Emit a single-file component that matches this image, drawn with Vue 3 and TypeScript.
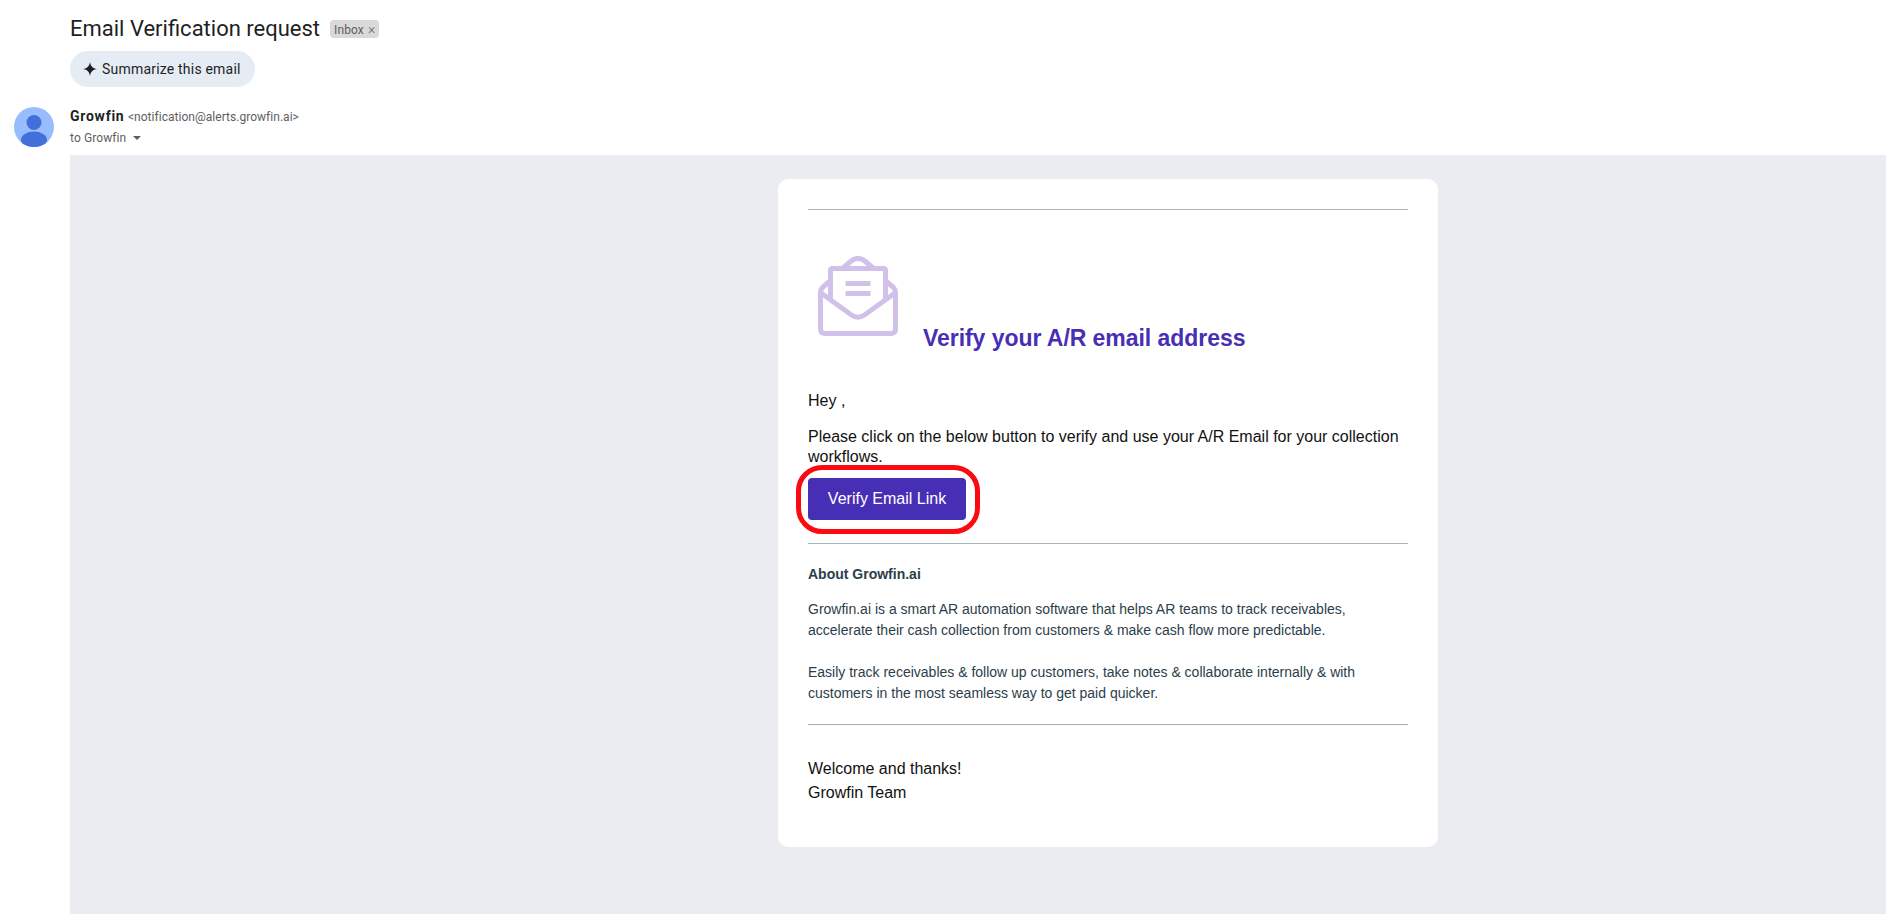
<script setup lang="ts">
const aboutParagraphs: string[] = [
  'Growfin.ai is a smart AR automation software that helps AR teams to track receivables, accelerate their cash collection from customers & make cash flow more predictable.',
  'Easily track receivables & follow up customers, take notes & collaborate internally & with customers in the most seamless way to get paid quicker.',
]
</script>

<template>
  <div class="page">
    <header class="head">
      <div class="title-row">
        <h1 class="title">Email Verification request</h1>
        <span class="chip">Inbox <span class="chip-x">×</span></span>
      </div>
      <button class="summarize" type="button">
        <svg class="spark" viewBox="0 0 16 16" width="16" height="16" aria-hidden="true">
          <path d="M8 1 C8.6 5.2 10.8 7.4 15 8 C10.8 8.6 8.6 10.8 8 15 C7.4 10.8 5.2 8.6 1 8 C5.2 7.4 7.4 5.2 8 1 Z" fill="#1f1f1f" />
        </svg>
        Summarize this email
      </button>
    </header>

    <section class="sender">
      <svg class="avatar" viewBox="0 0 40 40" width="40" height="40" aria-hidden="true">
        <defs>
          <clipPath id="avatar-clip"><circle cx="20" cy="20" r="20" /></clipPath>
        </defs>
        <g clip-path="url(#avatar-clip)">
          <rect width="40" height="40" fill="#98bdff" />
          <circle cx="20" cy="15.5" r="7.5" fill="#4270da" />
          <ellipse cx="20" cy="33" rx="13" ry="8.5" fill="#4270da" />
        </g>
      </svg>
      <div class="sender-text">
        <div class="from"><strong>Growfin</strong> <span class="addr">&lt;notification@alerts.growfin.ai&gt;</span></div>
        <div class="to">to Growfin <span class="caret"></span></div>
      </div>
    </section>

    <main class="canvas">
      <article class="card">
        <hr class="rule" />
        <div class="hero">
          <svg class="envelope" viewBox="0 0 80 80" width="80" height="80" fill="none" stroke="#d1c1e9" stroke-width="5" stroke-linejoin="round" stroke-linecap="round" aria-hidden="true">
            <path d="M12 25 L4.5 31.5 Q2.5 33.5 2.5 37 V73 Q2.5 77.5 7 77.5 H73 Q77.5 77.5 77.5 73 V37 Q77.5 33.5 75.5 31.5 L68 25" />
            <path d="M25 12 L32.5 5.5 Q40 -0.5 47.5 5.5 L55 12" />
            <path d="M3 37 L33.5 59 Q40 63.5 46.5 59 L77 37" />
            <path d="M12.5 43 V14.5 Q12.5 12.5 14.5 12.5 H65.5 Q67.5 12.5 67.5 14.5 V43" />
            <path d="M27.5 27.5 H52.5 M27.5 37.5 H52.5" stroke-linecap="butt" />
          </svg>
          <h2 class="heading">Verify your A/R email address</h2>
        </div>
        <p class="hey">Hey ,</p>
        <p class="intro">Please click on the below button to verify and use your A/R Email for your collection workflows.</p>
        <div class="cta">
          <a class="verify">Verify Email Link</a>
          <span class="highlight"></span>
        </div>
        <hr class="rule rule-mid" />
        <h3 class="about-title">About Growfin.ai</h3>
        <p v-for="text in aboutParagraphs" :key="text" class="about">{{ text }}</p>
        <hr class="rule rule-end" />
        <p class="signoff">Welcome and thanks!<br />Growfin Team</p>
      </article>
    </main>
  </div>
</template>

<style scoped>
.page {
  height: 914px;
  display: flex;
  flex-direction: column;
  overflow: hidden;
  background: #fff;
  color: #1f1f1f;
  font-family: Roboto, "Liberation Sans", sans-serif;
}
.head {
  padding: 14px 0 0 70px;
}
.title-row {
  display: flex;
  align-items: center;
  gap: 10px;
  height: 30px;
}
.title {
  margin: 0;
  font-size: 22px;
  font-weight: 400;
  line-height: 30px;
  color: #1f1f1f;
}
.chip {
  height: 18px;
  padding: 0 4px;
  border-radius: 4px;
  background: #d9d9d9;
  color: #5e5e5e;
  font-size: 12px;
  line-height: 18px;
  letter-spacing: 0.1px;
  white-space: nowrap;
}
.chip-x {
  margin-left: 1px;
  font-size: 14px;
  font-weight: 300;
}
.summarize {
  display: flex;
  align-items: center;
  gap: 4px;
  width: 185px;
  height: 36px;
  margin-top: 7px;
  padding: 0 0 0 12px;
  border: 0;
  border-radius: 18px;
  background: #e6ecf4;
  color: #1f1f1f;
  font-family: inherit;
  font-size: 14px;
  letter-spacing: 0.2px;
}
.spark {
  flex: none;
}
.sender {
  display: flex;
  gap: 16px;
  height: 68px;
  padding: 20px 0 0 14px;
  box-sizing: border-box;
}
.avatar {
  flex: none;
}
.from {
  font-size: 14px;
  line-height: 19px;
  white-space: nowrap;
}
.from strong {
  font-weight: 700;
  letter-spacing: 0.75px;
}
.addr {
  color: #5e5e5e;
  font-size: 12px;
  letter-spacing: 0.03px;
}
.to {
  display: flex;
  align-items: center;
  gap: 6px;
  margin-top: 1px;
  color: #5e5e5e;
  font-size: 12px;
  line-height: 20px;
  letter-spacing: 0.1px;
}
.caret {
  width: 0;
  height: 0;
  margin-left: 1px;
  border: 4px solid transparent;
  border-top: 4px solid #5e5e5e;
  border-bottom: 0;
}
.canvas {
  flex: 1;
  margin-left: 70px;
  padding: 24px 0 0 708px;
  background: #ebecf1;
  font-family: "Liberation Sans", Arial, sans-serif;
}
.card {
  box-sizing: border-box;
  width: 660px;
  height: 668px;
  padding: 30px;
  border-radius: 10px;
  background: #fff;
}
.rule {
  height: 1px;
  margin: 0;
  border: 0;
  background: #a8b4bd;
}
.hero {
  display: flex;
  align-items: flex-end;
  margin-top: 46px;
  height: 97px;
}
.envelope {
  flex: none;
  align-self: flex-start;
  margin-left: 10px;
}
.heading {
  margin: 0 0 0 25px;
  color: #472fb5;
  font-size: 23px;
  font-weight: 700;
  line-height: 30px;
  letter-spacing: -0.05px;
  white-space: nowrap;
}
.hey,
.intro {
  color: #111;
  font-size: 16px;
  line-height: 20px;
  margin: 0;
}
.hey {
  margin-top: 38px;
}
.intro {
  margin-top: 16px;
}
.cta {
  position: relative;
  width: 158px;
  margin-top: 11px;
}
.verify {
  display: block;
  height: 42px;
  border-radius: 4px;
  background: #472fb5;
  color: #fff;
  font-size: 16px;
  line-height: 42px;
  text-align: center;
}
.highlight {
  position: absolute;
  left: -12px;
  top: -13px;
  width: 184px;
  height: 69px;
  box-sizing: border-box;
  border: 5px solid #fb0a12;
  border-radius: 26px;
}
.rule-mid {
  margin-top: 23px;
}
.about-title {
  margin: 23px 0 0;
  color: #2c3e4a;
  font-size: 14px;
  font-weight: 700;
  line-height: 14px;
}
.about {
  margin: 18px 0 0;
  color: #2c3e4a;
  font-size: 14px;
  line-height: 21px;
}
.about + .about {
  margin-top: 21px;
}
.rule-end {
  margin-top: 20px;
  background: #9fb0ba;
}
.signoff {
  margin: 32px 0 0;
  color: #111;
  font-size: 16px;
  line-height: 24px;
}
</style>

<style>
html,
body {
  margin: 0;
  background: #fff;
}
</style>
